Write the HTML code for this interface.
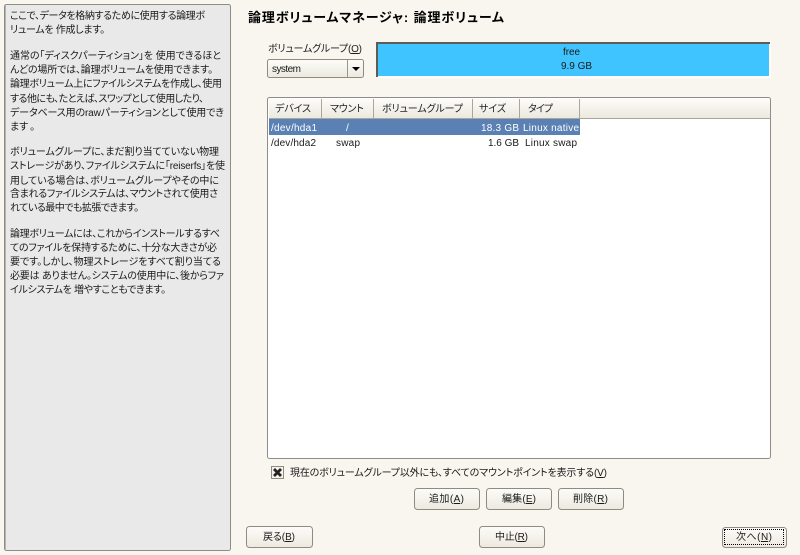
<!DOCTYPE html>
<html><head><meta charset="utf-8"><style>
html,body{margin:0;padding:0;background:#f9f6ef}
body{position:relative;width:800px;height:555px;overflow:hidden}
svg{display:block}
text{font-family:"Liberation Sans","Noto Sans CJK JP",sans-serif;font-size:10px;fill:#1a1a1a;white-space:pre;font-feature-settings:"palt";font-kerning:normal}
.h text{fill:#222}
.b{fill:url(#g);stroke:#8f8b80;stroke-width:1}
#focus{position:absolute;left:724px;top:529px;width:60px;height:16px;box-sizing:border-box;border:1px dotted #000}
</style></head><body>
<svg width="800" height="555" viewBox="0 0 800 555" xmlns="http://www.w3.org/2000/svg">
<defs><linearGradient id="g" x1="0" y1="0" x2="0" y2="1"><stop offset="0" stop-color="#fdfcf9"/><stop offset="1" stop-color="#ece9df"/></linearGradient></defs>
<rect width="800" height="555" fill="#f9f6ef"/>
<!-- left panel -->
<rect x="4.5" y="4.5" width="226" height="546" rx="2" fill="#e9e9e9" stroke="#8f8d87"/>
<rect x="5" y="5" width="1" height="545" fill="#b5b3ad"/>
<g>
<text x="10" y="19" textLength="195">ここで、データを格納するために使用する論理ボ</text>
<text x="10" y="33" textLength="95">リュームを 作成します。</text>
<text x="10" y="59" textLength="211">通常の「ディスクパーティション」を 使用できるほと</text>
<text x="10" y="73" textLength="203">んどの場所では、論理ボリュームを使用できます。</text>
<text x="10" y="87" textLength="212">論理ボリューム上にファイルシステムを作成し、使用</text>
<text x="10" y="102" textLength="194">する他にも、たとえば、スワップとして使用したり、</text>
<text x="10" y="116" textLength="214">データベース用のrawパーティションとして使用でき</text>
<text x="10" y="130">ます<tspan x="30">。</tspan></text>
<text x="10" y="155" textLength="209">ボリュームグループに、まだ割り当てていない物理</text>
<text x="10" y="169" textLength="215">ストレージがあり、ファイルシステムに「reiserfs」を使</text>
<text x="10" y="184" textLength="209">用している場合は、ボリュームグループやその中に</text>
<text x="10" y="197" textLength="208">含まれるファイルシステムは、マウントされて使用さ</text>
<text x="10" y="211" textLength="129">れている最中でも拡張できます。</text>
<text x="10" y="237" textLength="210">論理ボリュームには、これからインストールするすべ</text>
<text x="10" y="251" textLength="207">てのファイルを保持するために、十分な大きさが必</text>
<text x="10" y="265" textLength="211">要です。しかし、物理ストレージをすべて割り当てる</text>
<text x="10" y="279" textLength="214">必要は ありません。システムの使用中に、後からファ</text>
<text x="10" y="293" textLength="156">イルシステムを 増やすこともできます。</text>
</g>
<!-- title -->
<text x="248" y="22" textLength="256" style="font-size:13px;font-weight:bold;fill:#000">論理ボリュームマネージャ: 論理ボリューム</text>
<!-- combo -->
<text x="268" y="52" textLength="94">ボリュームグループ(<tspan text-decoration="underline">O</tspan>)</text>
<rect class="b" x="267.5" y="59.5" width="96" height="18" rx="2"/>
<rect x="347" y="60" width="1" height="17" fill="#9a968b"/>
<path d="M352 67h8l-4 4z" fill="#000"/>
<text x="272" y="72" textLength="29">system</text>
<!-- bar -->
<rect x="376" y="42" width="395" height="36" fill="#fff"/>
<rect x="376" y="42" width="394" height="2" fill="#5f5c55"/>
<rect x="376" y="42" width="2" height="35" fill="#5f5c55"/>
<rect x="378" y="44" width="391" height="32" fill="#40c4ff"/>
<text x="563" y="55" textLength="17">free</text>
<text x="561" y="69" textLength="31">9.9 GB</text>
<!-- table -->
<rect x="267.5" y="97.5" width="503" height="361" rx="2" fill="#fff" stroke="#8f8d87"/>
<rect x="269" y="99" width="501" height="19" fill="url(#g)"/>
<rect x="269" y="118" width="501" height="1" fill="#a9a69b"/>
<g fill="#a9a69b">
<rect x="321" y="99" width="1" height="19"/>
<rect x="373" y="99" width="1" height="19"/>
<rect x="472" y="99" width="1" height="19"/>
<rect x="519" y="99" width="1" height="19"/>
<rect x="579" y="99" width="1" height="19"/>
</g>
<g class="h">
<text x="275" y="112" textLength="36">デバイス</text>
<text x="330" y="112" textLength="34">マウント</text>
<text x="382" y="112" textLength="81">ボリュームグループ</text>
<text x="479" y="112" textLength="27">サイズ</text>
<text x="528" y="112" textLength="25">タイプ</text>
</g>
<rect x="269" y="119" width="311" height="16" fill="#5a80b4"/>
<text x="271" y="131" textLength="46" style="fill:#fff">/dev/hda1</text>
<text x="346" y="131" style="fill:#fff">/</text>
<text x="481" y="131" textLength="38" style="fill:#fff">18.3 GB</text>
<text x="523" y="131" textLength="56" style="fill:#fff">Linux native</text>
<text x="271" y="146" textLength="45">/dev/hda2</text>
<text x="336" y="146" textLength="24">swap</text>
<text x="488" y="146" textLength="31">1.6 GB</text>
<text x="525" y="146" textLength="52">Linux swap</text>
<!-- checkbox -->
<rect x="271.5" y="466.5" width="12" height="12" fill="#f4f2ea" stroke="#8f8b80"/>
<path d="M274 469l7 7M281 469l-7 7" stroke="#222" stroke-width="2.8"/>
<text x="290" y="476" textLength="317">現在のボリュームグループ以外にも、すべてのマウントポイントを表示する(<tspan text-decoration="underline">V</tspan>)</text>
<!-- buttons -->
<rect class="b" x="414.5" y="488.5" width="65" height="21" rx="3"/>
<text x="429" y="502" textLength="35">追加(<tspan text-decoration="underline">A</tspan>)</text>
<rect class="b" x="486.5" y="488.5" width="65" height="21" rx="3"/>
<text x="502" y="502" textLength="34">編集(<tspan text-decoration="underline">E</tspan>)</text>
<rect class="b" x="558.5" y="488.5" width="65" height="21" rx="3"/>
<text x="573" y="502" textLength="35">削除(<tspan text-decoration="underline">R</tspan>)</text>
<rect class="b" x="246.5" y="526.5" width="66" height="21" rx="3"/>
<text x="263" y="540" textLength="32">戻る(<tspan text-decoration="underline">B</tspan>)</text>
<rect class="b" x="479.5" y="526.5" width="65" height="21" rx="3"/>
<text x="495" y="540" textLength="33">中止(<tspan text-decoration="underline">R</tspan>)</text>
<rect class="b" x="722.5" y="527.5" width="64" height="20" rx="3"/>
<text x="736" y="540" textLength="36">次へ(<tspan text-decoration="underline">N</tspan>)</text>
</svg>
<div id="focus"></div>
</body></html>
